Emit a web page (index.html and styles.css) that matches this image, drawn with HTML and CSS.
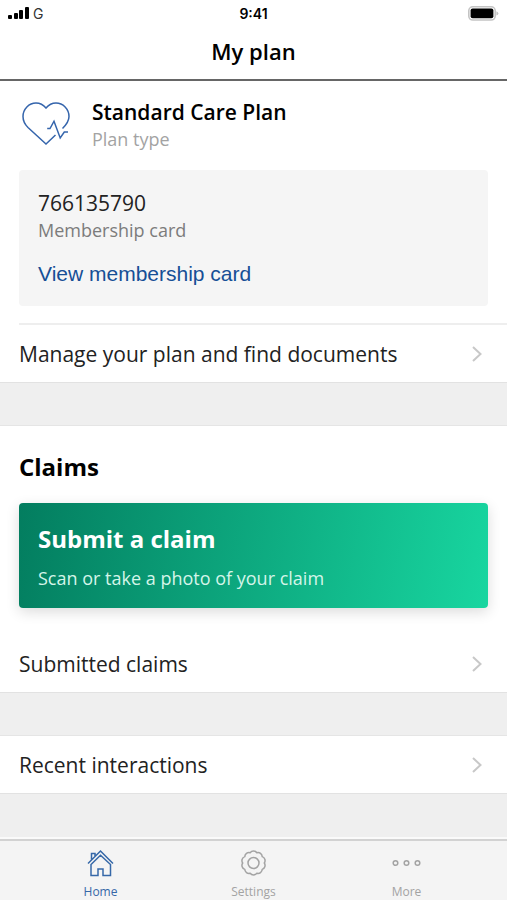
FILE: index.html
```html
<!DOCTYPE html>
<html lang="en">
<head>
<meta charset="utf-8">
<meta name="viewport" content="width=device-width, initial-scale=1">
<title>My plan</title>
<link rel="stylesheet" href="styles.css">
</head>
<body>
<div class="app">
  <div class="status">
    <div class="status-left">
      <svg width="22" height="14" viewBox="0 0 22 14" aria-hidden="true"><rect x="0" y="9" width="4" height="4" rx="1"/><rect x="6" y="7" width="4" height="6" rx="1"/><rect x="11" y="4" width="4" height="9" rx="1"/><rect x="17" y="1" width="4" height="12" rx="1"/></svg>
      <span class="carrier">G</span>
    </div>
    <time class="clock">9:41</time>
    <div class="status-right">
      <svg width="31" height="15" viewBox="0 0 31 15" aria-hidden="true"><rect x=".8" y=".8" width="26.4" height="13.2" rx="4" fill="#fff" stroke="#c4c4c4" stroke-width="1.6"/><rect x="2.6" y="2.6" width="22.8" height="9.6" rx="2"/><path d="M28.4 5.2q2 .7 2 2.2t-2 2.2z" fill="#c4c4c4"/></svg>
    </div>
  </div>
  <header class="header"><h1>My plan</h1></header>
  <main>
    <section class="panel">
      <div class="plan">
        <svg class="heart" width="48" height="44" viewBox="0 0 48 44" aria-hidden="true"><path d="M40.500 26.500C44.500 22.500 47 19.500 47 14.500C47 7 41 1 34 1C30 1 26.500 3 24 6C21.500 3 18 1 14 1C7 1 1 7 1 14.500C1 19 3 22.500 6 25.500L24 42L33.500 33"/><path d="M25.200 26.500H28L32 19.200L38.200 36L42.300 30H46"/></svg>
        <div>
          <h2 class="plan-name">Standard Care Plan</h2>
          <p class="plan-type">Plan type</p>
        </div>
      </div>
      <div class="member">
        <p class="member-number">766135790</p>
        <p class="member-label">Membership card</p>
        <a class="member-link" href="#card">View membership card</a>
      </div>
      <a class="row row-ruled" href="#manage"><span>Manage your plan and find documents</span><svg class="chevron" width="10" height="16" viewBox="0 0 10 16" aria-hidden="true"><path d="M1 1L8.500 8L1 15"/></svg></a>
    </section>
    <section class="panel">
      <h2 class="claims-title">Claims</h2>
      <button class="submit" type="button"><span class="submit-title">Submit a claim</span><span class="submit-text">Scan or take a photo of your claim</span></button>
      <a class="row" href="#claims"><span>Submitted claims</span><svg class="chevron" width="10" height="16" viewBox="0 0 10 16" aria-hidden="true"><path d="M1 1L8.500 8L1 15"/></svg></a>
    </section>
    <section class="panel">
      <a class="row" href="#recent"><span>Recent interactions</span><svg class="chevron" width="10" height="16" viewBox="0 0 10 16" aria-hidden="true"><path d="M1 1L8.500 8L1 15"/></svg></a>
    </section>
  </main>
  <nav class="tabs" aria-label="Main">
    <a class="tab tab-active" href="#home"><svg width="28" height="28" viewBox="0 0 28 28" aria-hidden="true"><path d="M1 14.500L13.500 2L26 14.500M4.500 10.500V4.500H8V7M4 15.500V26.500H11V20H16V26.500H23.500V15.500L13.500 6.200Z"/></svg><span>Home</span></a>
    <a class="tab" href="#settings"><svg width="28" height="28" viewBox="0.5 0 28 28" aria-hidden="true"><path stroke-linejoin="round" d="M17.340 3.730A4.200 4.200 0 0 1 22.740 7.650A4.200 4.200 0 0 1 24.800 14A4.200 4.200 0 0 1 22.740 20.350A4.200 4.200 0 0 1 17.340 24.270A4.200 4.200 0 0 1 10.660 24.270A4.200 4.200 0 0 1 5.260 20.350A4.200 4.200 0 0 1 3.200 14A4.200 4.200 0 0 1 5.260 7.650A4.200 4.200 0 0 1 10.660 3.730A4.200 4.200 0 0 1 17.340 3.730Z"/><circle cx="14" cy="14" r="5.500"/></svg><span>Settings</span></a>
    <a class="tab" href="#more"><svg width="30" height="28" viewBox="0.5 0 30 28" aria-hidden="true"><circle cx="4" cy="14" r="2.300"/><circle cx="15" cy="14" r="2.300"/><circle cx="26" cy="14" r="2.300"/></svg><span>More</span></a>
  </nav>
</div>
</body>
</html>
```
FILE: styles.css
```css
* { box-sizing: border-box; }
body { margin: 0; background: #efefef; color: #000; font-family: "Open Sans", "Noto Sans", sans-serif; }
h1, h2, p { margin: 0; }
a { color: inherit; text-decoration: none; }
svg { display: block; flex: none; }

.app { display: flex; flex-direction: column; min-height: 100vh; }
main { flex: 1; }

.status { display: grid; grid-template-columns: 1fr auto 1fr; align-items: center; height: 26px; padding: 0 8px; background: #fff; font-family: Inter, sans-serif; }
.status-left { display: flex; align-items: center; gap: 3px; }
.carrier { font-size: 14px; color: #333; }
.clock { font-size: 14px; font-weight: 600; }
.status-right { display: flex; justify-content: flex-end; }

.header { padding: 10px 20px 12px; border-bottom: 2px solid #666; background: #fff; text-align: center; }
.header h1 { font-size: 22px; line-height: 31px; font-weight: 600; }

.panel { margin-bottom: 42px; border-bottom: 1px solid #e2e2e2; background: #fff; }
.panel + .panel { border-top: 1px solid #e5e5e5; }

.plan { display: flex; align-items: flex-start; gap: 22px; padding: 17px 20px 18px 22px; }
.heart { margin-top: 4px; fill: none; stroke: #3565ac; stroke-width: 1.5; }
.plan-name { font-size: 21px; line-height: 28px; font-weight: 600; }
.plan-type { font-size: 18px; line-height: 26px; color: #a3a3a3; }

.member { margin: 0 19px; padding: 19px 19px 18px; border-radius: 4px; background: #f5f5f5; }
.member-number { font-size: 21px; line-height: 28px; color: #222; }
.member-label { font-size: 18px; line-height: 26px; color: #7c7c7c; }
.member-link { display: block; margin-top: 17px; font: 21px/28px "Liberation Sans", sans-serif; color: #164f96; }

.row { display: flex; align-items: center; justify-content: space-between; min-height: 57px; padding: 0 25px 0 0; margin-left: 19px; font-size: 21px; line-height: 28px; color: #222; }
.row-ruled { min-height: 59px; margin-top: 17px; border-top: 2px solid #eee; }
.chevron { fill: none; stroke: #c8c8c8; stroke-width: 2; }

.claims-title { padding: 24px 19px 19px; font-size: 24px; line-height: 34px; font-weight: 700; }
.submit { display: flex; flex-direction: column; gap: 9px; width: calc(100% - 38px); margin: 0 19px 27px; padding: 19px 19px 17px; border: 0; border-radius: 4px; background: linear-gradient(100deg, #037d5f, #18d6a0); box-shadow: 0 4px 14px rgb(0 0 0 / 14%); color: #fff; font-family: inherit; text-align: left; }
.submit-title { font-size: 24px; line-height: 34px; font-weight: 700; }
.submit-text { font-size: 18px; line-height: 26px; color: #d4f5e9; }

.tabs { display: grid; grid-template-columns: repeat(3, 1fr); padding: 8px 24px 0; border-top: 2px solid #d2d2d2; background: #f4f4f4; height: 61px; box-shadow: 0 -2px #fafafa; }
.tab { display: flex; flex-direction: column; align-items: center; gap: 7px; font-size: 12px; line-height: 16px; color: #a3a3a3; }
.tab svg { fill: none; stroke: currentColor; stroke-width: 1.5; }
.tab-active { color: #3668a8; }
```
